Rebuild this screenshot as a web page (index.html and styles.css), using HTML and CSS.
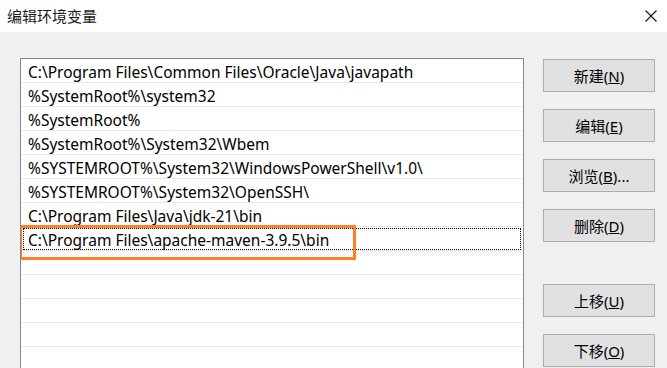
FILE: index.html
```html
<!DOCTYPE html>
<html lang="zh-CN">
<head>
    <meta charset="UTF-8">
    <meta name="viewport" content="width=device-width, initial-scale=1.0">
    <title>编辑环境变量</title>

    <link rel="stylesheet" href="styles.css">

</head>
<body>
    <div class="titlebar">
        <span class="title">编辑环境变量</span>
        <svg class="close" width="12" height="12" viewBox="0 0 12 12">
            <path d="M0.5 0.5 L11.5 11.5 M11.5 0.5 L0.5 11.5" stroke="#111" stroke-width="1.1" fill="none"/>
        </svg>
    </div>

    <div class="dialog">
        <div class="list">
            <div class="row">C:\Program Files\Common Files\Oracle\Java\javapath</div>
            <div class="row">%SystemRoot%\system32</div>
            <div class="row">%SystemRoot%</div>
            <div class="row">%SystemRoot%\System32\Wbem</div>
            <div class="row">%SYSTEMROOT%\System32\WindowsPowerShell\v1.0\</div>
            <div class="row">%SYSTEMROOT%\System32\OpenSSH\</div>
            <div class="row">C:\Program Files\Java\jdk-21\bin</div>
            <div class="row focus">C:\Program Files\apache-maven-3.9.5\bin</div>
            <div class="row"></div>
            <div class="row"></div>
            <div class="row"></div>
            <div class="row"></div>
            <div class="row"></div>

            <!-- 标注框 -->
            <div class="mark"></div>
        </div>

        <div class="buttons">
            <button>新建(<u>N</u>)</button>
            <button>编辑(<u>E</u>)</button>
            <button>浏览(<u>B</u>)...</button>
            <button>删除(<u>D</u>)</button>
            <button class="gap">上移(<u>U</u>)</button>
            <button>下移(<u>O</u>)</button>
        </div>
    </div>
</body>
</html>
```

FILE: styles.css
```css
*{
    margin: 0;
    padding: 0;
    box-sizing: border-box;
}

body{
    width: 667px;
    height: 368px;
    overflow: hidden;
    background: #f0f0f0;
    color: #000;
    font-family: "Noto Sans", "Noto Sans CJK SC", sans-serif;
    font-size: 15px;
}

.titlebar{
    height: 32px;
    background: #fff;
    display: flex;
    align-items: center;
    justify-content: space-between;
    padding: 0 10px 2px 7px;
}

.title{
    font-family: "Noto Sans CJK SC", sans-serif;
    font-size: 15px;
    color: #1a1a1a;
}

.close{
    margin-top: 1px;
}

.dialog{
    display: flex;
    gap: 19px;
    padding: 26px 0 0 20px;
}

.list{
    position: relative;
    width: 504px;
    height: 310px;
    overflow: hidden;
    background: #fff;
    border: 1px solid #828790;
    border-bottom: none;
    padding: 0 1px;
}

.row{
    height: 24px;
    line-height: 26px;
    border-bottom: 1px solid #e8e8e8;
    padding-left: 6px;
    white-space: nowrap;
    font-size: 15.5px;
}

.focus{
    outline: 1px dotted #000;
    outline-offset: -2px;
}

.mark{
    position: absolute;
    left: -2px;
    top: 166px;
    width: 337px;
    height: 35px;
    border: 3px solid #ff7f27;
}

.buttons{
    display: flex;
    flex-direction: column;
    gap: 17px;
    padding-top: 1px;
}

button{
    width: 112px;
    height: 33px;
    background: #e1e1e1;
    border: 1px solid #adadad;
    font-family: "Noto Sans", "Noto Sans CJK SC", sans-serif;
    font-size: 15px;
    color: #000;
}

button.gap{
    margin-top: 25px;
}
```
